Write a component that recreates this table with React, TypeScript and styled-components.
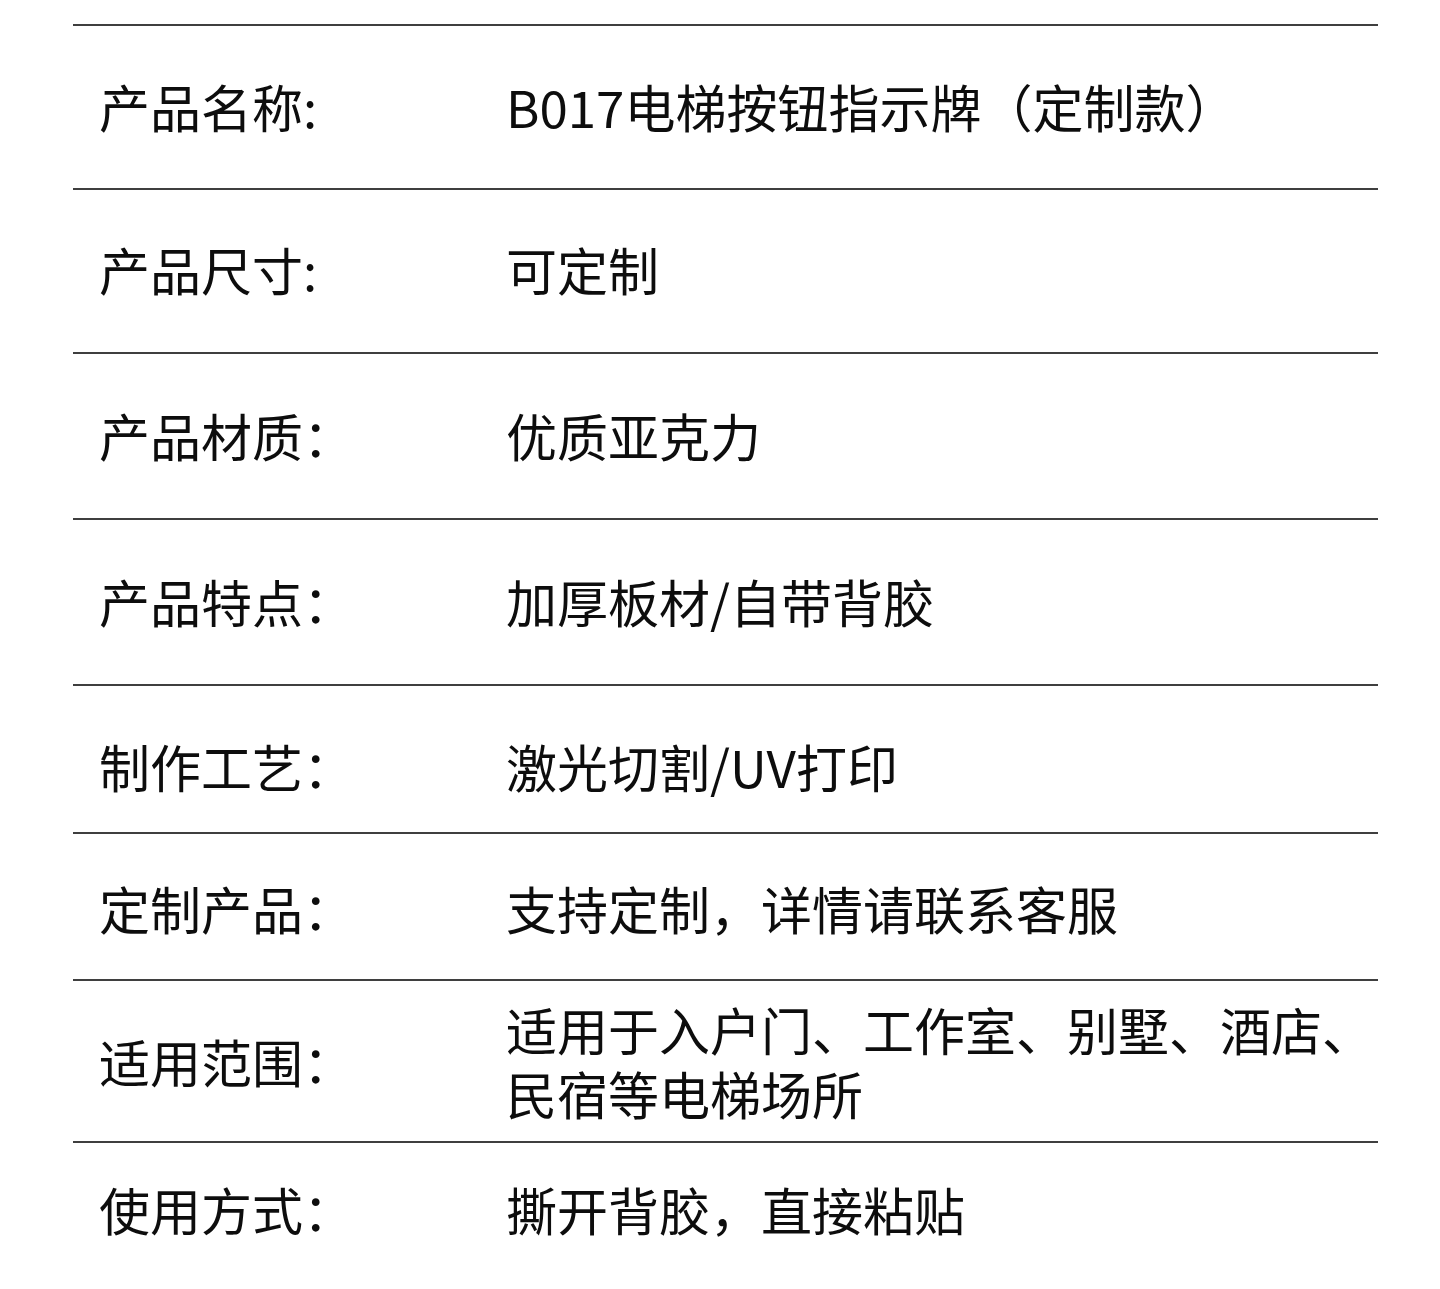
import React from "react";
import styled, { createGlobalStyle } from "styled-components";

const GlobalStyle = createGlobalStyle`
  html, body {
    margin: 0;
    padding: 0;
    background: #ffffff;
  }
  body {
    font-family: "Noto Sans CJK SC", "Noto Sans", sans-serif;
    color: #0d0d0d;
  }
`;

const Page = styled.div`
  width: 1440px;
  height: 1289px;
  overflow: hidden;
  padding-top: 24px;
  box-sizing: border-box;
`;

const Table = styled.div`
  margin-left: 73px;
  width: 1305px;
  display: flex;
  flex-direction: column;
`;

const Row = styled.div<{ $h: number; $shift?: number }>`
  box-sizing: border-box;
  height: ${(p) => p.$h}px;
  border-top: 2px solid #3f3f3f;
  display: grid;
  grid-template-columns: 433px 1fr;
  align-items: center;
  padding-top: ${(p) => Math.max(0, (p.$shift ?? 0) * 2)}px;
  padding-bottom: ${(p) => Math.max(0, -(p.$shift ?? 0) * 2)}px;
`;

const Label = styled.div`
  padding-left: 26px;
  font-size: 51px;
  line-height: 64px;
  white-space: nowrap;
`;

const Value = styled.div`
  font-size: 51px;
  line-height: 64px;
`;

const rows: { label: string; value: string; h: number; shift?: number }[] = [
  { label: "产品名称:", value: "B017电梯按钮指示牌（定制款）", h: 164, shift: -1 },
  { label: "产品尺寸:", value: "可定制", h: 164, shift: -2 },
  { label: "产品材质：", value: "优质亚克力", h: 166, shift: -1 },
  { label: "产品特点：", value: "加厚板材/自带背胶", h: 166, shift: -1 },
  { label: "制作工艺：", value: "激光切割/UV打印", h: 148, shift: 7 },
  { label: "定制产品：", value: "支持定制，详情请联系客服", h: 147, shift: 1 },
  {
    label: "适用范围：",
    value: "适用于入户门、工作室、别墅、酒店、民宿等电梯场所",
    h: 162,
    shift: 0,
  },
  { label: "使用方式：", value: "撕开背胶，直接粘贴", h: 148, shift: -7 },
];

export default function App() {
  return (
    <>
      <GlobalStyle />
      <Page>
        <Table>
          {rows.map((r) => (
            <Row key={r.label} $h={r.h} $shift={r.shift}>
              <Label>{r.label}</Label>
              <Value>{r.value}</Value>
            </Row>
          ))}
        </Table>
      </Page>
    </>
  );
}
